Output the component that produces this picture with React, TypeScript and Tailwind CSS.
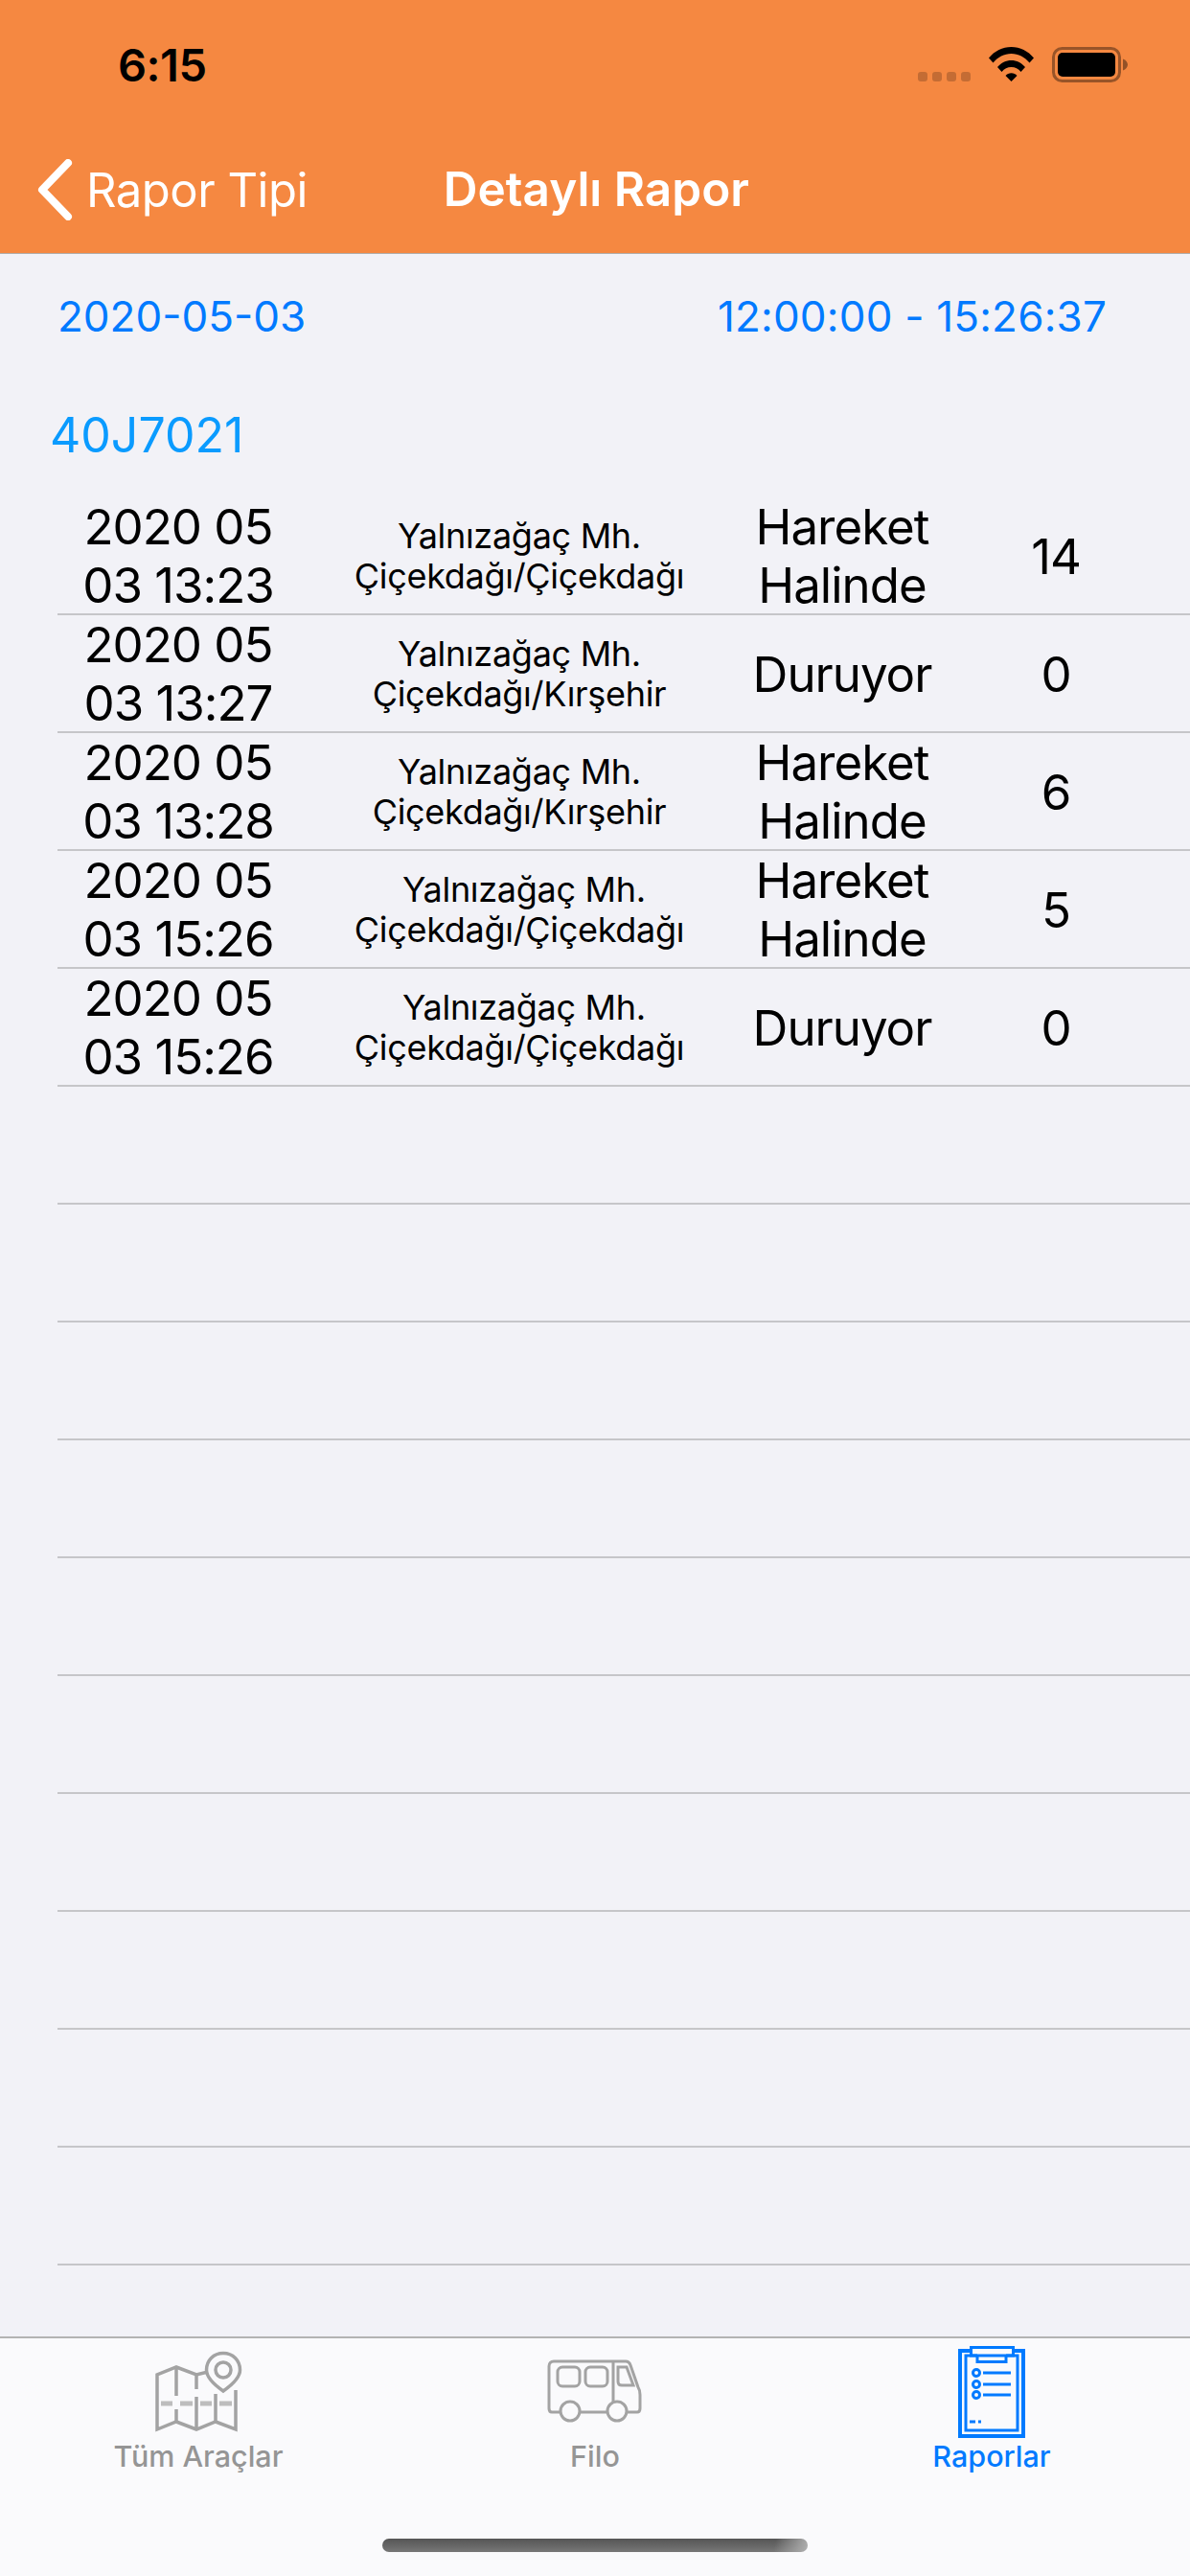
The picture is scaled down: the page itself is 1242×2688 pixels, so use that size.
const rows = [
  { time: ['2020 05', '03 13:23'], addr: ['Yalnızağaç Mh.', 'Çiçekdağı/Çiçekdağı'], status: ['Hareket', 'Halinde'], speed: '14' },
  { time: ['2020 05', '03 13:27'], addr: ['Yalnızağaç Mh.', 'Çiçekdağı/Kırşehir'], status: ['Duruyor'], speed: '0' },
  { time: ['2020 05', '03 13:28'], addr: ['Yalnızağaç Mh.', 'Çiçekdağı/Kırşehir'], status: ['Hareket', 'Halinde'], speed: '6' },
  { time: ['2020 05', '03 15:26'], addr: [' Yalnızağaç Mh.', 'Çiçekdağı/Çiçekdağı'], status: ['Hareket', 'Halinde'], speed: '5' },
  { time: ['2020 05', '03 15:26'], addr: [' Yalnızağaç Mh.', 'Çiçekdağı/Çiçekdağı'], status: ['Duruyor'], speed: '0' },
];

const EMPTY_ROWS = Array.from({ length: 10 }, (_, i) => i);

function Wifi() {
  return (
    <svg width="47" height="36" viewBox="0 0 47 36" fill="#000">
      <path d="M0 11.5C6 4.2 14.300 0 23.500 0S41 4.200 47 11.500L42.500 16.500C37.600 10.600 31 7 23.500 7S9.400 10.600 4.500 16.500Z" />
      <path d="M9 21C13 16.400 18 14 23.500 14S34 16.400 38 21L33.500 26C30.800 22.800 27.500 21 23.500 21S16.200 22.800 13.500 26Z" />
      <path d="M17.500 30C19 28.200 21 27.200 23.500 27.200S28 28.200 29.500 30L23.500 36Z" />
    </svg>
  );
}

function Battery() {
  return (
    <svg width="79" height="37" viewBox="0 0 79 37">
      <rect x="1.500" y="1.500" width="69" height="34" rx="9" fill="none" stroke="#000" strokeOpacity="0.38" strokeWidth="3" />
      <rect x="6" y="6" width="60" height="25" rx="5" fill="#000" />
      <path d="M74 12.500C77 13.500 79 16 79 18.500S77 23.500 74 24.500Z" fill="#000" fillOpacity="0.4" />
    </svg>
  );
}

function MapIcon() {
  return (
    <svg width="120" height="96" viewBox="0 0 120 96" fill="none" stroke="#a3a3a3" strokeWidth="3.500">
      <path d="M70 27L58 30L37 22L17 30V87L37 79L58 87L78 79L99 87V46" />
      <path d="M37 22V52M37 66V79M58 30V45M58 53V87M78 50V79" />
      <path d="M21 60H33M41 60H54M62 60H74M82 60H95" strokeWidth="5" strokeOpacity="0.7" />
      <path d="M86 47C76 40 68.500 33 68.500 25C68.500 15 76 7.500 86 7.500C96 7.500 103.500 15 103.500 25C103.500 33 96 40 86 47Z" fill="#fafafc" />
      <circle cx="86" cy="25" r="8" />
    </svg>
  );
}

function BusIcon() {
  return (
    <svg width="120" height="96" viewBox="0 0 120 96" fill="none" stroke="#a3a3a3" strokeWidth="3">
      <path d="M23 69H15C13 69 12 67 12 65V21C12 18 14 16 17 16H92C94 16 96 17 97 20L105 43C107 46 107 48 107 51V65C107 67 106 69 104 69H94" />
      <path d="M44 69H74" />
      <path d="M79 16V58" />
      <circle cx="34" cy="68" r="10" />
      <circle cx="83" cy="68" r="10" />
      <rect x="21" y="22" width="23" height="20" rx="5" />
      <rect x="50" y="22" width="23" height="20" rx="5" />
      <path d="M84 22H93L100 41H88C85 41 84 39 84 37Z" />
    </svg>
  );
}

function ClipboardIcon() {
  return (
    <svg width="120" height="96" viewBox="0 0 120 96" fill="none" stroke="#007aff" strokeWidth="3">
      <path d="M38 5H27V94H93V5H83" strokeWidth="4" />
      <path d="M45 10H33V88H87V10H75" />
      <rect x="38.500" y="1.500" width="44" height="8.500" />
      <path d="M45 10V16.500H75V10" />
      <circle cx="44" cy="28" r="3.500" />
      <circle cx="44" cy="40" r="3.500" />
      <circle cx="44" cy="51" r="3.500" />
      <path d="M51 28H80M51 40H80M51 51H80" />
      <path d="M37 79H43M46 79H49" />
    </svg>
  );
}

export default function App() {
  return (
    <div className="flex h-[2688px] w-[1242px] flex-col overflow-hidden bg-[#f2f2f7] font-['Inter',sans-serif]">
      {/* Status + nav */}
      <header className="h-[265px] border-b border-[#b0aca8] bg-[#f58841]">
        <div className="flex h-[132px] items-start justify-between pl-[123px] pr-[65px] pt-[49px]">
          <span className="text-[47px] leading-[37px] font-semibold tracking-[-0.5px] text-black">6:15</span>
          <div className="flex items-start">
            <div className="mt-[26px] mr-[19px] flex gap-[5px]">
              <div className="h-[10px] w-[10px] rounded-[3px] bg-black/20" />
              <div className="h-[10px] w-[10px] rounded-[3px] bg-black/20" />
              <div className="h-[10px] w-[10px] rounded-[3px] bg-black/20" />
              <div className="h-[10px] w-[10px] rounded-[3px] bg-black/20" />
            </div>
            <Wifi />
            <div className="ml-[19px]">
              <Battery />
            </div>
          </div>
        </div>
        <div className="flex h-[132px] items-center pl-[38px]">
          <svg width="40" height="64" viewBox="0 0 40 64" fill="none" stroke="#fff" strokeWidth="8" strokeLinecap="round" strokeLinejoin="round">
            <path d="M33 4L6 32L33 60" />
          </svg>
          <span className="ml-[12px] text-[49px] leading-none tracking-[-0.5px] text-white">Rapor Tipi</span>
          <span className="ml-[142px] text-[49.5px] leading-none font-semibold text-white">Detaylı Rapor</span>
        </div>
      </header>

      <main className="flex-1">
        <div className="flex h-[129px] items-center justify-between pl-[60px] pr-[87px] text-[44px] text-[#007aff]">
          <span>2020-05-03</span>
          <span className="tracking-[0.2px]">12:00:00 - 15:26:37</span>
        </div>
        <div className="mt-[28px] flex h-[64px] items-center pl-[52px] text-[50px] text-[#0a9bff]">40J7021</div>
        <div className="ml-[60px] mt-[33px]">
          {rows.map((row, i) => (
            <div key={i} className="flex h-[123px] items-center border-b-2 border-[#c6c6c9] pt-px text-center text-[51px] leading-[61px] tracking-[-1px] text-black">
              <div className="w-[252px]">
                {row.time.map((t) => (
                  <div key={t}>{t}</div>
                ))}
              </div>
              <div className="w-[460px] text-[36px] leading-[42px] tracking-[-0.3px]">
                {row.addr.map((t) => (
                  <div key={t} className="whitespace-pre">{t}</div>
                ))}
              </div>
              <div className="w-[214px]">
                {row.status.map((t) => (
                  <div key={t}>{t}</div>
                ))}
              </div>
              <div className="w-[232px]">{row.speed}</div>
            </div>
          ))}
          {EMPTY_ROWS.map((i) => (
            <div key={i} className="h-[123px] border-b-2 border-[#c6c6c9]" />
          ))}
        </div>
      </main>

      {/* Tab bar */}
      <nav className="relative h-[250px] border-t-2 border-[#b3b3b3] bg-[#fafafc] pt-[8px]">
        <div className="grid grid-cols-3">
          <div className="flex flex-col items-center text-[30.5px] leading-[36px] font-medium text-[#959595]">
            <MapIcon />
            <span className="mt-[1px]">Tüm Araçlar</span>
          </div>
          <div className="flex flex-col items-center text-[30.5px] leading-[36px] font-medium text-[#959595]">
            <BusIcon />
            <span className="mt-[1px]">Filo</span>
          </div>
          <div className="flex flex-col items-center text-[30.5px] leading-[36px] font-medium text-[#007aff]">
            <ClipboardIcon />
            <span className="mt-[1px]">Raporlar</span>
          </div>
        </div>
        <div className="absolute bottom-[25px] left-[399px] h-[14px] w-[444px] rounded-full bg-[linear-gradient(100deg,transparent_92%,#b0b0b0),linear-gradient(#555555,#777777)]" />
      </nav>
    </div>
  );
}
